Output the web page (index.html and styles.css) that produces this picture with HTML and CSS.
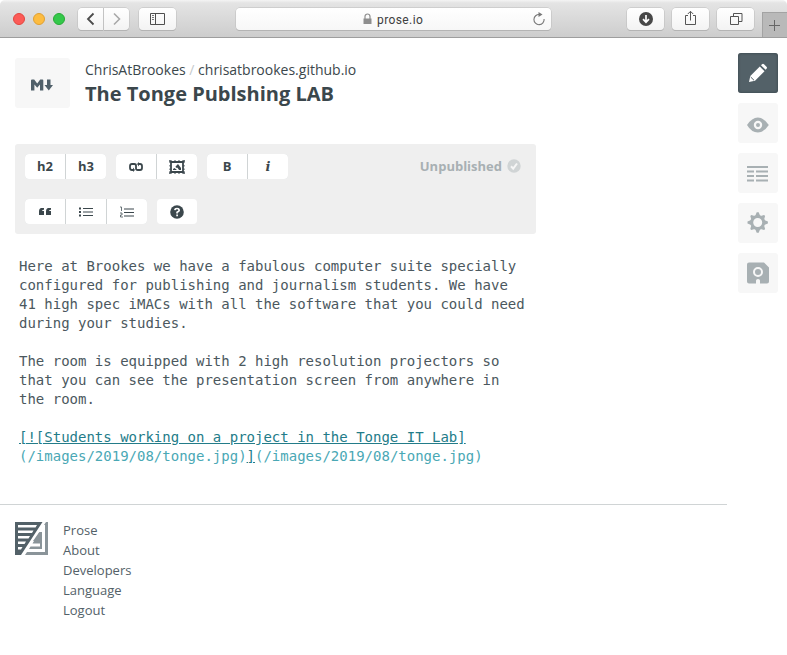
FILE: index.html
```html
<!DOCTYPE html>
<html lang="en">
<head>
<meta charset="utf-8">
<title>Prose</title>
<link rel="stylesheet" href="styles.css">
</head>
<body>
<header class="chrome">
  <div class="lights"><i class="red"></i><i class="amber"></i><i class="green"></i></div>
  <div class="nav">
    <span class="cbtn back"><svg width="25" height="22"><path d="M15.500 5.500L10 11l5.500 5.500" stroke="#4b4b4b" stroke-width="1.800" fill="none"/></svg></span>
    <span class="cbtn fwd"><svg width="25" height="22"><path d="M10 5.500L15.500 11L10 16.500" stroke="#a9a9a9" stroke-width="1.600" fill="none"/></svg></span>
  </div>
  <span class="cbtn panel"><svg width="37" height="22"><path d="M11.500 5.500h14v11h-14zM16.500 5.500v11" stroke="#4f4f4f" fill="none"/><path d="M13 7.500h2M13 9.500h2M13 11.500h2" stroke="#777"/></svg></span>
  <div class="address">
    <svg class="lock" width="9" height="12"><path d="M2 6V3.500a2.500 2.500 0 0 1 5 0V6" stroke="#8e8e8e" stroke-width="1.200" fill="none"/><path d="M.5 5.500h8V11h-8z" fill="#8e8e8e"/></svg>
    <span>prose.io</span>
    <svg class="reload" width="14" height="14"><path d="M7.500 2.500A5.100 5.100 0 1 0 12.100 7" stroke="#777" stroke-width="1.100" fill="none"/><path d="M6.500 0L10.500 2.600L6.500 5z" fill="#777"/></svg>
  </div>
  <div class="tools">
    <span class="cbtn"><svg width="37" height="22"><circle cx="19" cy="11" r="7" fill="#484848"/><path d="M19 7v7M16 11.200l3 3l3-3" stroke="#fff" stroke-width="1.700" fill="none"/></svg></span>
    <span class="cbtn"><svg width="37" height="22"><path d="M16 7.500h-2.500v9h10v-9H21M18.500 12.500V3.500M15.800 6l2.700-2.700L21.200 6" stroke="#555" fill="none"/></svg></span>
    <span class="cbtn"><svg width="37" height="22"><path d="M13.500 8.500h8v8h-8zM16.500 8.500v-3h8.500v8h-3.500" stroke="#555" fill="none"/></svg></span>
  </div>
  <span class="newtab"><svg width="25" height="25"><path d="M12.500 8v11M7 13.500h11" stroke="#666"/></svg></span>
</header>

<div class="layout">
  <main class="page">
    <div class="heading">
      <div class="filetype"><svg width="22" height="12"><path d="M0 11.500V1.500Q0 .5 1 .5h2.200L6.200 4.500L9.200 .5h2.300Q12.300 .5 12.300 1.500v10H9V5.500L6.200 8.800L3.400 5.500v6z" fill="#50606a"/><path d="M16 .5h3.500V6H22l-4.200 5.500L13.500 6H16z" fill="#50606a"/></svg></div>
      <div>
        <div class="crumbs">ChrisAtBrookes <span class="slash">/</span> chrisatbrookes.github.io</div>
        <h1>The Tonge Publshing LAB</h1>
      </div>
    </div>

    <section class="toolbar">
      <div class="buttons">
        <div class="group"><b class="txt">h2</b><b class="txt">h3</b></div>
        <div class="group">
          <b><svg width="14" height="10"><path d="M4.500 8H3Q1 8 1 6V4Q1 2 3 2H5.200Q7 2 7 3.500V5.500M9.500 2H11Q13 2 13 4V6Q13 8 11 8H8.800Q7 8 7 6.500V4.500" stroke="#3b474c" stroke-width="1.800" fill="none"/><path d="M4 5.500L6 8L4 10zM10 0v4.500L8 2z" fill="#3b474c"/></svg></b>
          <b><svg width="16" height="14"><path d="M2 2h12v10H2z" fill="none" stroke="#3b474c" stroke-width="1.800"/><path d="M0 1h3M5 1h2M9 1h2M13 1h3M0 13h3M5 13h2M9 13h2M13 13h3M1 0v3M1 5v1.500M1 8.500v1.500M1 11v3M15 0v3M15 5v1.500M15 8.500v1.500M15 11v3" stroke="#3b474c"/><path d="M4 10V9l1.500-1l1.200 1L8 10zM6.500 6.500L9 4l3 4v2h-2L8.500 7.800L7 7.800z" fill="#3b474c"/></svg></b>
        </div>
        <div class="group"><b class="txt">B</b><b class="ital">i</b></div>
        <div class="group">
          <b><svg width="14" height="9"><path d="M6 1v1.700Q4.200 2.700 4 4H6V8H1V4.500Q1 1 3.500 1zM13 1v1.700Q11.200 2.700 11 4h2V8H8V4.500Q8 1 10.500 1z" fill="#3b474c"/></svg></b>
          <b><svg width="14" height="10"><path d="M4 1.500h10M4 5h10M4 8.500h10" stroke="#3b474c" stroke-width="1.200"/><path d="M0 1.500h2M0 5h2M0 8.500h2" stroke="#3b474c" stroke-width="2"/></svg></b>
          <b><svg width="14" height="12"><path d="M4 3h10M4 6.500h10M4 10h10" stroke="#3b474c" stroke-width="1.200"/><path d="M0 1h1.500v4M0 7h2v2H.5v2H3" stroke="#59656a" stroke-width=".9" fill="none"/></svg></b>
        </div>
        <div class="group">
          <b><svg width="14" height="14"><circle cx="7" cy="7" r="6.800" fill="#3b474c"/><path d="M4.800 5.200Q5 3.500 7 3.500T9.200 5.200Q9.200 6.300 7.100 7.300V8.500M7.100 9.500v1.800" stroke="#fff" stroke-width="1.700" fill="none"/></svg></b>
        </div>
      </div>
      <div class="status">Unpublished <svg width="14" height="14"><circle cx="7" cy="7" r="6.700" fill="#d0d4d5"/><path d="M4 7.300l2.200 2.300L10 4.500" stroke="#f6f6f6" stroke-width="2" fill="none"/></svg></div>
    </section>

<pre class="editor">Here at Brookes we have a fabulous computer suite specially
configured for publishing and journalism students. We have
41 high spec iMACs with all the software that you could need
during your studies.

The room is equipped with 2 high resolution projectors so
that you can see the presentation screen from anywhere in
the room.

<span class="link">[![Students working on a project in the Tonge IT Lab]</span>
<span class="url">(/images/2019/08/tonge.jpg)</span><span class="link">]</span><span class="url">(/images/2019/08/tonge.jpg)</span></pre>

    <footer>
      <svg class="logo" width="33" height="33"><path d="M0 0h27.500L6 33H0zM3 3v2.500h17.500L22 3zM3 8.500V11h14l1.500-2.500zM3 14v2.500h10.500l1.500-2.500zM3 19.500V22h6.500l1.500-2.500zM3 25v2.500h3L7.500 25z" fill="#536168" fill-rule="evenodd"/><path d="M31 0h2v33H10l2-3H30V3h-1z" fill="#8a9499"/><path d="M24.500 10H27v17H14l1.500-2.500H25V21.500h-7.500L19 19h6v-2h-4.500z" fill="#8a9499"/><path d="M24 10.500h2V19h-8z" fill="#8a9499"/></svg>
      <nav><a>Prose</a><a>About</a><a>Developers</a><a>Language</a><a>Logout</a></nav>
    </footer>
  </main>

  <aside class="modes">
    <span class="active"><svg width="40" height="40"><path d="M11 29l1.300-6L21.800 13.500l4.700 4.700L17 27.700z" fill="#fff"/><path d="M23 12.200l1-1q1-.8 2 0l2.500 2.600q1 1 0 2l-.9 1z" fill="#fff"/><path d="M12.700 24l3.300 3.300" stroke="#536168"/></svg></span>
    <span><svg width="40" height="40"><path d="M9 22Q14 14.500 19.800 14.500T30.800 22Q26 29.500 19.800 29.500T9 22z" fill="#a8b0b3"/><circle cx="20" cy="22" r="3.100" fill="none" stroke="#f7f7f7" stroke-width="2.200"/></svg></span>
    <span><svg width="40" height="40"><path d="M9 14h21M9 18.500h7M18 18.500h12M9 23h7M18 23h12M9 27.500h7M18 27.500h12" stroke="#a8b0b3" stroke-width="2"/></svg></span>
    <span><svg width="40" height="40"><circle cx="19.700" cy="19.500" r="6" fill="none" stroke="#a8b0b3" stroke-width="3"/><path d="M17.200 13l1.500-3.700h2l1.500 3.700zM17.200 26l1.500 3.700h2l1.500-3.700zM13.200 17l-3.700 1.500v2l3.700 1.500zM26.200 17l3.700 1.500v2L26.200 22zM12.300 13l1-1l3.400 1l-3.400 3.400zM27.100 13l-1-1l-3.400 1l3.400 3.400zM12.300 26l1 1l3.400-1l-3.400-3.400zM27.100 26l-1 1l-3.400-1l3.400-3.400z" fill="#a8b0b3"/></svg></span>
    <span><svg width="40" height="40"><path d="M11 9.500h15l5 5V28.500q0 2-2 2h-7v-3q0-1.500-2-1.500t-2 1.500v3H11q-2 0-2-2v-17q0-2 2-2z" fill="#a8b0b3"/><circle cx="20" cy="19" r="4" fill="none" stroke="#f7f7f7" stroke-width="2"/></svg></span>
  </aside>
</div>
</body>
</html>
```
FILE: styles.css
```css
* { box-sizing: border-box; }
body { margin: 0; width: 787px; height: 655px; overflow: hidden; background: #fff; color: #3b474c; font-family: "Open Sans", sans-serif; font-size: 13px; }
svg { display: block; }

.chrome { display: flex; align-items: flex-start; height: 38px; padding: 8px 0 0 13px; background: linear-gradient(#f4f4f4 0, #e4e4e4 3px, #cdcdcd 100%); border-bottom: 1px solid #9e9e9e; border-radius: 5px 5px 0 0; }
.lights { display: flex; gap: 8px; padding-top: 5px; margin-right: 13px; }
.lights i { width: 12px; height: 12px; border-radius: 50%; border: 1px solid; }
.red { background: #fc5b57; border-color: #e2463f !important; }
.amber { background: #fdbc40; border-color: #dfa033 !important; }
.green { background: #34c84a; border-color: #27aa35 !important; }
.cbtn { display: block; height: 22px; border-radius: 4px; background: linear-gradient(#fff, #f3f3f3); box-shadow: 0 0 0 .5px #bbb, 0 1px 0 #acacac; }
.nav { display: flex; gap: 1px; margin: 0 10px 0 0; width: 51px; }
.back { border-radius: 4px 0 0 4px; }
.fwd { border-radius: 0 4px 4px 0; }
.panel { margin-right: 60px; }
.address { display: flex; flex: 1; align-items: center; height: 22px; margin-right: 76px; padding: 0 5px 0 127px; border-radius: 4px; background: linear-gradient(#fff, #f7f7f7); box-shadow: 0 0 0 .5px #bbb, 0 1px 0 #acacac; font: 12px/22px Roboto, sans-serif; letter-spacing: .4px; color: #404040; }
.address span { padding-top: 2px; }
.lock { margin-right: 5px; }
.reload { margin-left: auto; }
.tools { display: flex; gap: 8px; margin-right: 8px; }
.newtab { width: 25px; height: 25px; margin-top: 4px; background: #b9b9b9; box-shadow: inset 1px 1px 0 #a3a3a3; }

.layout { display: flex; }
.page { width: 727px; }
.modes { display: flex; flex-direction: column; gap: 10px; padding: 15px 0 0 11px; }
.modes span { width: 40px; height: 40px; border-radius: 3px; background: #f7f7f7; }
.modes .active { background: #536168; box-shadow: inset 0 0 3px #354147; }

.heading { display: flex; gap: 15px; padding: 20px 15px 0; height: 106px; }
.filetype { display: flex; align-items: center; justify-content: center; width: 55px; height: 50px; border-radius: 3px; background: #f7f7f7; padding: 3px 2px 0 0; }
.crumbs { font-size: 14px; line-height: 24px; white-space: nowrap; }
.slash { color: #c5cacc; }
h1 { margin: -1px 0 0; font-size: 20px; line-height: 26px; font-weight: 700; white-space: nowrap; }

.toolbar { display: flex; justify-content: space-between; width: 521px; height: 90px; margin-left: 15px; padding: 10px 15px 10px 10px; border-radius: 3px; background: #efefef; }
.buttons { display: flex; flex-wrap: wrap; gap: 20px 10px; width: 290px; }
.group { display: flex; gap: 1px; height: 25px; border-radius: 4px; overflow: hidden; background: #d0d4d5; }
.group b { display: flex; align-items: center; justify-content: center; width: 40px; height: 25px; background: #fff; font-size: 13px; }
.group .txt { padding-bottom: 2px; }
.group .ital { font: italic bold 13px "DejaVu Serif", serif; }
.status { display: flex; align-items: center; gap: 5px; height: 24px; color: #a8b0b3; font-weight: 700; }

.editor { height: 247px; margin: 23px 0 0 19px; font: 14px/19px "DejaVu Sans Mono", monospace; color: #4b585e; }
.link { color: #237c89; text-decoration: underline; }
.url { color: #4aa8b5; }

footer { display: flex; gap: 15px; padding: 15px 15px 0; border-top: 1px solid #d0d4d5; }
.logo { margin-top: 2px; }
nav { display: flex; flex-direction: column; }
nav a { line-height: 20px; color: #536168; }
```
